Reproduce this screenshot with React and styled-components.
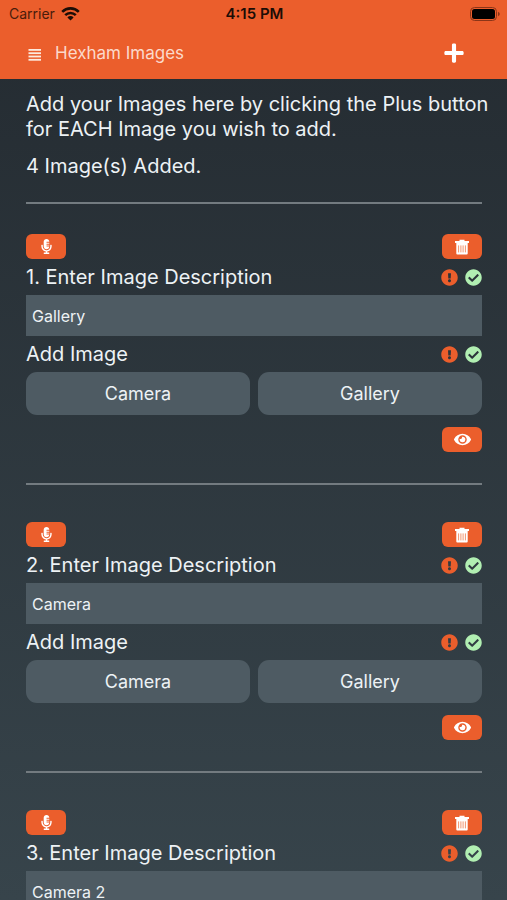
import React, { useState } from "react";
import styled, { createGlobalStyle } from "styled-components";
import {
  FaPlus,
  FaMicrophoneAlt,
  FaEye,
  FaExclamationCircle,
  FaCheckCircle,
} from "react-icons/fa";

const GlobalStyle = createGlobalStyle`
  * {
    box-sizing: border-box;
  }
  body {
    margin: 0;
    font-family: Inter, "Liberation Sans", sans-serif;
    color: #edf2f5;
  }
  button, input {
    font-family: inherit;
    color: inherit;
  }
`;

const Screen = styled.div`
  height: 100vh;
  display: flex;
  flex-direction: column;
  background: linear-gradient(#242b31, #37444b);
`;

const Header = styled.header`
  flex: none;
  background: #eb5e2c;
`;

const StatusBar = styled.div`
  display: grid;
  grid-template-columns: 1fr auto 1fr;
  align-items: center;
  height: 27px;
  padding: 0 7px 0 9px;
  font-size: 14px;
  color: #1c0d06;
`;

const Carrier = styled.span`
  display: flex;
  align-items: center;
  gap: 6px;
  color: #4a1c0b;
`;

const Clock = styled.span`
  font-size: 15px;
  font-weight: 600;
`;

const Battery = styled.svg`
  justify-self: end;
`;

const NavBar = styled.div`
  display: flex;
  align-items: center;
  height: 52px;
  padding: 0 42px 0 28px;
`;

const NavButton = styled.button`
  display: flex;
  padding: 0;
  border: none;
  background: none;
  color: #fff;
  cursor: pointer;
`;

const Title = styled.h1`
  flex: 1;
  margin: 0 0 0 13px;
  font-size: 17px;
  font-weight: 400;
  color: #fbd9cb;
`;

const Content = styled.main`
  flex: 1;
  min-height: 0;
  overflow: hidden auto;
  scrollbar-width: none;
  padding: 13px 25px 0 26px;
`;

const Text = styled.p`
  margin: 0 -12px 12px 0;
  font-size: 20px;
  line-height: 25px;
`;

const Divider = styled.hr`
  height: 2px;
  margin: ${(props) => props.$top}px 0 ${(props) => props.$bottom}px;
  border: none;
  background: #737b80;
`;

const Row = styled.div`
  display: flex;
  align-items: center;
  justify-content: ${(props) => (props.$end ? "flex-end" : "space-between")};
`;

const LabelRow = styled(Row)`
  height: 24px;
  margin: 6px 0;
  font-size: 20px;
`;

const Status = styled.span`
  display: flex;
  gap: 7px;
`;

const IconButton = styled.button`
  display: flex;
  align-items: center;
  justify-content: center;
  width: 40px;
  height: 25px;
  padding: 0;
  border: none;
  border-radius: 6px;
  background: #eb5e2c;
  color: #fff;
  cursor: pointer;
`;

const Input = styled.input`
  display: block;
  width: 100%;
  height: 41px;
  padding: 0 6px;
  border: none;
  border-radius: 0;
  background: #4e5b63;
  font-size: 16px;
`;

const Sources = styled.div`
  display: grid;
  grid-template-columns: 1fr 1fr;
  gap: 8px;
  margin-bottom: 12px;
`;

const SourceButton = styled.button`
  height: 43px;
  border: none;
  border-radius: 11px;
  background: #4e5b63;
  font-size: 18px;
  cursor: pointer;
`;

const MenuIcon = () => (
  <svg width="14" height="15" viewBox="0 0 14 15" fill="#fdeade">
    <rect x="0.5" y="3" width="12.5" height="1.8" />
    <rect x="0.5" y="6.3" width="12.5" height="1.8" />
    <rect x="0.5" y="9.6" width="12.5" height="1.8" />
    <rect x="0.5" y="12.9" width="12.5" height="1.8" />
  </svg>
);

const WifiIcon = () => (
  <svg width="19" height="14" viewBox="0 0 19 14" fill="none" stroke="#1c0d06">
    <path d="M1.2 4.8a11.8 11.8 0 0 1 16.6 0" strokeWidth="2.6" />
    <path d="M4.2 8.1a7.5 7.5 0 0 1 10.6 0" strokeWidth="2.5" />
    <path d="M6.4 10.4a4.3 4.3 0 0 1 6.2 0L9.5 13.6z" fill="#1c0d06" stroke="none" />
  </svg>
);

const TrashIcon = () => (
  <svg width="14" height="16" viewBox="0 0 14 16">
    <path d="M4.5 2V0.8h5V2H14v2H0V2z" fill="#fff" />
    <path d="M1.3 4h11.4v10.6a1 1 0 0 1-1 1H2.3a1 1 0 0 1-1-1z" fill="#fff" />
    <path
      d="M3.6 6.4v7M5.9 6.4v7M8.1 6.4v7M10.4 6.4v7"
      stroke="#f2956f"
      strokeWidth="1"
    />
  </svg>
);

const StatusIcons = () => (
  <Status>
    <FaExclamationCircle size={17} color="#eb5e2c" />
    <FaCheckCircle size={17} color="#b1efb2" />
  </Status>
);

const ImageEntry = ({ number, value, onChange, onRemove }) => {
  const id = `description-${number}`;

  return (
    <section>
      <Row>
        <IconButton aria-label="Dictate description">
          <FaMicrophoneAlt size={15} />
        </IconButton>
        <IconButton aria-label="Delete image" onClick={onRemove}>
          <TrashIcon />
        </IconButton>
      </Row>
      <LabelRow>
        <label htmlFor={id}>{number}. Enter Image Description</label>
        <StatusIcons />
      </LabelRow>
      <Input id={id} value={value} onChange={(e) => onChange(e.target.value)} />
      <LabelRow>
        <span>Add Image</span>
        <StatusIcons />
      </LabelRow>
      <Sources>
        <SourceButton>Camera</SourceButton>
        <SourceButton>Gallery</SourceButton>
      </Sources>
      <Row $end>
        <IconButton aria-label="View image">
          <FaEye size={17} />
        </IconButton>
      </Row>
      <Divider $top={31} $bottom={37} />
    </section>
  );
};

export default function App() {
  const [images, setImages] = useState(["Gallery", "Camera", "Camera 2", "Gallery 2"]);

  const update = (index, value) => {
    setImages(images.map((image, i) => (i === index ? value : image)));
  };

  return (
    <Screen>
      <GlobalStyle />
      <Header>
        <StatusBar>
          <Carrier>
            Carrier
            <WifiIcon />
          </Carrier>
          <Clock>4:15 PM</Clock>
          <Battery width="30" height="14" viewBox="0 0 30 14">
            <rect x="0.5" y="0.5" width="26" height="13" rx="4" fill="none" stroke="#8a3518" />
            <rect x="2" y="2" width="23" height="10" rx="2.5" fill="#000" />
            <path d="M28 4.8q1.8 0.8 1.8 2.2t-1.8 2.2z" fill="#8a3518" />
          </Battery>
        </StatusBar>
        <NavBar>
          <NavButton aria-label="Menu">
            <MenuIcon />
          </NavButton>
          <Title>Hexham Images</Title>
          <NavButton aria-label="Add image" onClick={() => setImages([...images, ""])}>
            <FaPlus size={22} />
          </NavButton>
        </NavBar>
      </Header>
      <Content>
        <Text>
          Add your Images here by clicking the Plus button for EACH Image you wish to add.
        </Text>
        <Text>{images.length} Image(s) Added.</Text>
        <Divider $top={23} $bottom={30} />
        {images.map((image, index) => (
          <ImageEntry
            key={index}
            number={index + 1}
            value={image}
            onChange={(value) => update(index, value)}
            onRemove={() => setImages(images.filter((_, i) => i !== index))}
          />
        ))}
      </Content>
    </Screen>
  );
}
